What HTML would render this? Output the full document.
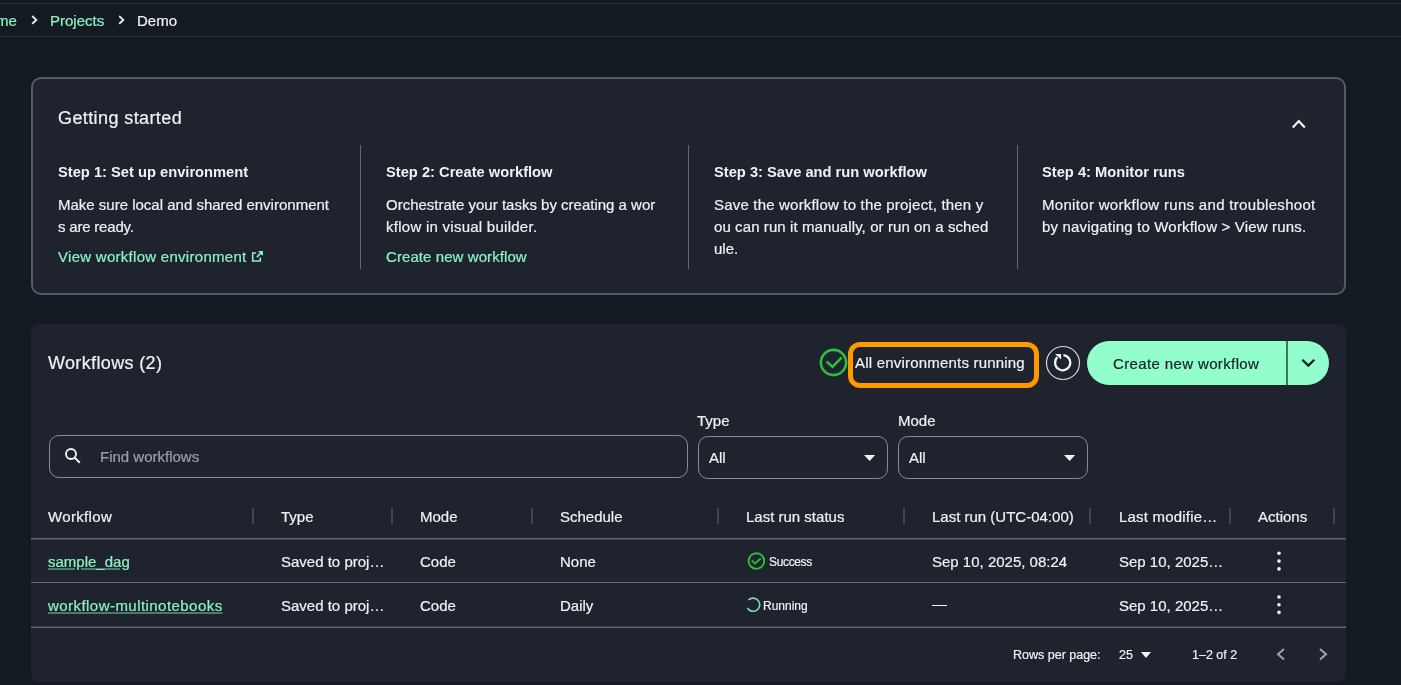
<!DOCTYPE html>
<html><head><meta charset="utf-8">
<style>
*{box-sizing:border-box;margin:0;padding:0}
html,body{width:1401px;height:685px;overflow:hidden;background:#141a21;font-family:"Liberation Sans",sans-serif;color:#f0f1f3;position:relative}
.a{position:absolute;white-space:nowrap;-webkit-text-stroke:0.2px currentColor}
.t15{font-size:15px;line-height:18px}
.g{color:#8cf2c5}
.hl{position:absolute;left:0;width:1401px;height:1px;background:#30333f}
.panel{position:absolute;background:#1e232d}
.vd{position:absolute;width:1px;background:#62666f}
.bold{font-weight:700;font-size:14.7px;line-height:22px;-webkit-text-stroke:0}
.body{font-size:15px;line-height:22px}
.box{position:absolute;border:1px solid #868b95;border-radius:10px}
.cd{position:absolute;top:508px;width:2px;height:16px;background:#42464f}
.rl{position:absolute;left:31px;width:1315px;height:1px;background:#676a75}
</style></head><body><div id="root" style="position:absolute;left:0;top:0;width:1401px;height:685px;will-change:transform">
<div class="hl" style="top:3px"></div>
<div class="hl" style="top:36px"></div>
<div class="a t15 g" style="left:-4px;top:12px">me</div>
<svg class="a" style="left:29px;top:14px" width="10" height="12" viewBox="0 0 10 12"><path d="M3.2 2 L7.3 5.9 L3.2 9.8" fill="none" stroke="#e6e7e9" stroke-width="1.9"/></svg>
<div class="a t15 g" style="left:50px;top:12px">Projects</div>
<svg class="a" style="left:116px;top:14px" width="10" height="12" viewBox="0 0 10 12"><path d="M3.2 2 L7.3 5.9 L3.2 9.8" fill="none" stroke="#e6e7e9" stroke-width="1.9"/></svg>
<div class="a t15" style="left:137px;top:12px">Demo</div>

<!-- Getting started -->
<div class="panel" style="left:31px;top:77px;width:1315px;height:218px;border:2px solid #565a66;border-radius:10px"></div>
<div class="a" style="left:58px;top:107px;font-size:18px;line-height:22px;letter-spacing:0.4px">Getting started</div>
<svg class="a" style="left:1290px;top:117px" width="17" height="14" viewBox="0 0 17 14"><path d="M2.8 10.6 L8.8 4.1 L14.8 10.6" fill="none" stroke="#f2f3f4" stroke-width="2.2"/></svg>

<div class="a bold" style="left:58px;top:161px">Step 1: Set up environment</div>
<div class="a body" style="left:58px;top:194px">Make sure local and shared environment<br><span style="letter-spacing:-0.2px">s are ready.</span></div>
<div class="a body g" style="left:58px;top:246px;letter-spacing:0.28px">View workflow environment</div>
<svg class="a" style="left:250px;top:249px" width="14" height="14" viewBox="0 0 14 14"><path d="M6.2 4 H2.7 V12 H10.3 V8.6 M8.6 2.7 H12.2 V6.3 M12 2.9 L6.8 8.1" fill="none" stroke="#8cf2c5" stroke-width="1.6"/></svg>
<div class="vd" style="left:360px;top:145px;height:124px"></div>

<div class="a bold" style="left:386px;top:161px">Step 2: Create workflow</div>
<div class="a body" style="left:386px;top:194px">Orchestrate your tasks by creating a wor<br><span style="letter-spacing:0.26px">kflow in visual builder.</span></div>
<div class="a body g" style="left:386px;top:246px;letter-spacing:0.08px">Create new workflow</div>
<div class="vd" style="left:688px;top:145px;height:124px"></div>

<div class="a bold" style="left:714px;top:161px">Step 3: Save and run workflow</div>
<div class="a body" style="left:714px;top:194px"><span style="letter-spacing:0.19px">Save the workflow to the project, then y</span><br><span style="letter-spacing:0.09px">ou can run it manually, or run on a sched</span><br>ule.</div>
<div class="vd" style="left:1017px;top:145px;height:124px"></div>

<div class="a bold" style="left:1042px;top:161px">Step 4: Monitor runs</div>
<div class="a body" style="left:1042px;top:194px"><span style="letter-spacing:0.31px">Monitor workflow runs and troubleshoot</span><br><span style="letter-spacing:0.18px">by navigating to Workflow &gt; View runs.</span></div>

<!-- Workflows -->
<div class="panel" style="left:31px;top:324px;width:1315px;height:358px;border-radius:8px"></div>
<div class="a" style="left:48px;top:352px;font-size:18px;line-height:22px;letter-spacing:0.35px">Workflows (2)</div>

<svg class="a" style="left:818px;top:347px" width="31" height="31" viewBox="0 0 31 31"><circle cx="15.5" cy="15.5" r="12.6" fill="none" stroke="#2dbf39" stroke-width="2.6"/><path d="M8.6 14.6 L14.5 19.8 L23.8 10.4" fill="none" stroke="#2dbf39" stroke-width="2.6"/></svg>
<div class="a" style="left:848px;top:342px;width:191px;height:46px;border:5px solid #ff9900;border-radius:12px"></div>
<div class="a t15" style="left:855px;top:354px;letter-spacing:0.2px">All environments running</div>

<svg class="a" style="left:1045px;top:345px" width="36" height="36" viewBox="0 0 36 36"><circle cx="18" cy="18" r="16.5" fill="none" stroke="#d4d6d9" stroke-width="1.2"/><path d="M18.4 10.1 A7.6 7.6 0 1 1 12.3 12.3" fill="none" stroke="#f2f3f4" stroke-width="2.2"/><path d="M10.1 9.1 L16.1 9.1 L16.1 14.6 Z" fill="#f2f3f4"/></svg>

<div class="a" style="left:1087px;top:341px;width:242px;height:44px;background:#91fecb;border-radius:22px"></div>
<div class="a" style="left:1286px;top:341px;width:2px;height:44px;background:#437463"></div>
<div class="a t15" style="left:1113px;top:355px;color:#16202a;letter-spacing:0.37px">Create new workflow</div>
<svg class="a" style="left:1299px;top:355px" width="18" height="14" viewBox="0 0 18 14"><path d="M3.3 4.7 L9.3 10.6 L15.3 4.7" fill="none" stroke="#111a22" stroke-width="2.2"/></svg>

<div class="a t15" style="left:697px;top:412px">Type</div>
<div class="a t15" style="left:898px;top:412px">Mode</div>

<div class="box" style="left:49px;top:435px;width:639px;height:43px"></div>
<svg class="a" style="left:62px;top:445px" width="22" height="22" viewBox="0 0 22 22"><circle cx="9" cy="9" r="5" fill="none" stroke="#f2f3f4" stroke-width="1.9"/><path d="M12.6 12.6 L17.8 17.8" stroke="#f2f3f4" stroke-width="2"/></svg>
<div class="a t15" style="left:100px;top:448px;color:#9aa0a7">Find workflows</div>

<div class="box" style="left:698px;top:436px;width:190px;height:43px"></div>
<div class="a t15" style="left:709px;top:449px">All</div>
<svg class="a" style="left:862px;top:452px" width="16" height="10" viewBox="0 0 16 10"><path d="M2 3 H13.2 L7.6 8.9 Z" fill="#f2f3f4"/></svg>
<div class="box" style="left:898px;top:436px;width:190px;height:43px"></div>
<div class="a t15" style="left:909px;top:449px">All</div>
<svg class="a" style="left:1062px;top:452px" width="16" height="10" viewBox="0 0 16 10"><path d="M2 3 H13.2 L7.6 8.9 Z" fill="#f2f3f4"/></svg>

<!-- table header -->
<div class="a t15" style="left:48px;top:508px;letter-spacing:0.33px">Workflow</div>
<div class="cd" style="left:252px"></div>
<div class="a t15" style="left:281px;top:508px">Type</div>
<div class="cd" style="left:391px"></div>
<div class="a t15" style="left:420px;top:508px">Mode</div>
<div class="cd" style="left:531px"></div>
<div class="a t15" style="left:560px;top:508px">Schedule</div>
<div class="cd" style="left:717px"></div>
<div class="a t15" style="left:746px;top:508px">Last run status</div>
<div class="cd" style="left:903px"></div>
<div class="a t15" style="left:932px;top:508px">Last run (UTC-04:00)</div>
<div class="cd" style="left:1089px"></div>
<div class="a t15" style="left:1119px;top:508px;letter-spacing:0.2px">Last modifie…</div>
<div class="cd" style="left:1229px"></div>
<div class="a t15" style="left:1258px;top:508px">Actions</div>
<div class="cd" style="left:1333px"></div>
<div class="rl" style="top:538px;box-shadow:0 1px 0 #3b3f4a"></div>

<!-- row 1 -->
<div class="a t15 g" style="left:48px;top:553px;text-decoration:underline;text-decoration-color:rgba(140,242,197,0.42);text-decoration-thickness:1.5px;text-underline-offset:1.3px">sample_dag</div>
<div class="a t15" style="left:281px;top:553px">Saved to proj…</div>
<div class="a t15" style="left:420px;top:553px">Code</div>
<div class="a t15" style="left:560px;top:553px">None</div>
<svg class="a" style="left:746px;top:551px" width="20" height="20" viewBox="0 0 20 20"><circle cx="10.4" cy="10" r="7.8" fill="none" stroke="#2dbf39" stroke-width="1.85"/><path d="M5.8 9.4 L9 12.6 L14.8 7.3" fill="none" stroke="#2dbf39" stroke-width="1.8"/></svg>
<div class="a" style="left:769px;top:554px;font-size:12px;line-height:16px;letter-spacing:-0.35px">Success</div>
<div class="a t15" style="left:932px;top:553px">Sep 10, 2025, 08:24</div>
<div class="a t15" style="left:1119px;top:553px">Sep 10, 2025…</div>
<svg class="a" style="left:1273px;top:549px" width="12" height="24" viewBox="0 0 12 24"><circle cx="6" cy="4.3" r="1.8" fill="#f2f3f4"/><circle cx="6" cy="12.1" r="1.8" fill="#f2f3f4"/><circle cx="6" cy="19.9" r="1.8" fill="#f2f3f4"/></svg>
<div class="rl" style="top:582px"></div>

<!-- row 2 -->
<div class="a t15 g" style="left:48px;top:597px;text-decoration:underline;text-decoration-color:rgba(140,242,197,0.42);text-decoration-thickness:1.5px;text-underline-offset:1.3px;letter-spacing:0.45px">workflow-multinotebooks</div>
<div class="a t15" style="left:281px;top:597px">Saved to proj…</div>
<div class="a t15" style="left:420px;top:597px">Code</div>
<div class="a t15" style="left:560px;top:597px">Daily</div>
<svg class="a" style="left:744px;top:596px" width="18" height="18" viewBox="0 0 18 18"><path d="M4.43 4.03 A6.6 6.6 0 1 1 3.38 12" fill="none" stroke="#7fdcae" stroke-width="1.6"/></svg>
<div class="a" style="left:763px;top:598px;font-size:12px;line-height:16px">Running</div>
<div class="a" style="left:932px;top:605px;width:15px;height:1.3px;background:#f0f1f3"></div>
<div class="a t15" style="left:1119px;top:597px">Sep 10, 2025…</div>
<svg class="a" style="left:1273px;top:593px" width="12" height="24" viewBox="0 0 12 24"><circle cx="6" cy="4" r="1.8" fill="#f2f3f4"/><circle cx="6" cy="11.7" r="1.8" fill="#f2f3f4"/><circle cx="6" cy="19.4" r="1.8" fill="#f2f3f4"/></svg>
<div class="rl" style="top:627px;box-shadow:0 -1px 0 #3b3f4a"></div>

<!-- pagination -->
<div class="a" style="left:1013px;top:647px;font-size:12.5px;line-height:16px">Rows per page:</div>
<div class="a" style="left:1119px;top:647px;font-size:12.5px;line-height:16px">25</div>
<svg class="a" style="left:1140px;top:651px" width="12" height="8" viewBox="0 0 12 8"><path d="M1 1 H11 L6 7 Z" fill="#f2f3f4"/></svg>
<div class="a" style="left:1192px;top:647px;font-size:12.5px;line-height:16px">1–2 of 2</div>
<svg class="a" style="left:1275px;top:647px" width="12" height="16" viewBox="0 0 12 16"><path d="M9 1.9 L3 7.2 L9 12.5" fill="none" stroke="#9fa3ab" stroke-width="2"/></svg>
<svg class="a" style="left:1316px;top:647px" width="12" height="16" viewBox="0 0 12 16"><path d="M4 1.9 L10 7.2 L4 12.5" fill="none" stroke="#9fa3ab" stroke-width="2"/></svg>
</div></body></html>
